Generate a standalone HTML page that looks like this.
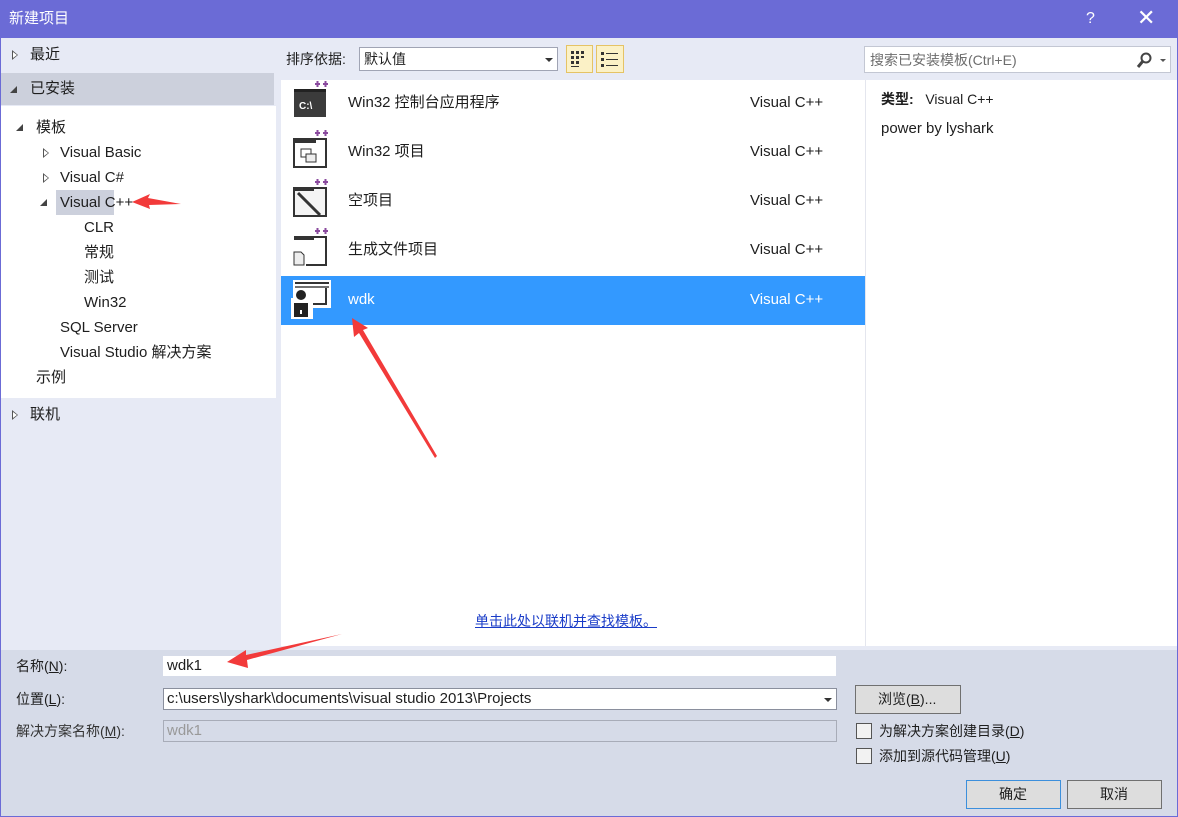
<!DOCTYPE html>
<html><head><meta charset="utf-8"><style>
*{margin:0;padding:0;box-sizing:border-box}
body{width:1178px;height:817px;position:relative;overflow:hidden;background:#e7eaf5;font-family:"Liberation Sans","Noto Sans CJK SC",sans-serif;font-size:15px;color:#1e1e1e}
.a{position:absolute;white-space:nowrap;line-height:20px}
.tri{position:absolute;width:0;height:0}
.ro{border-left:6px solid #555;border-top:5px solid transparent;border-bottom:5px solid transparent}
.ro::after{content:"";position:absolute;left:-5px;top:-3px;border-left:4px solid #fff;border-top:3px solid transparent;border-bottom:3px solid transparent}
.dn{border-right:7px solid #444;border-top:7px solid transparent}
.item{position:absolute;left:281px;width:584px;height:49px;line-height:20px}
.item .t{position:absolute;left:67px;top:14px}
.item .v{position:absolute;left:469px;top:14px}
u{text-decoration:underline}
</style></head><body>
<div class="a" style="left:0;top:0;width:1178px;height:817px;border:1px solid #6b6bd6;z-index:5"></div>
<div class="a" style="left:0;top:0;width:1178px;height:38px;background:#6b6bd6"></div>
<div class="a" style="left:9px;top:9px;color:#fff;font-size:15px">新建项目</div>
<div class="a" style="left:1086px;top:9px;color:#fff;font-size:16px">?</div>
<div class="a" style="left:1137px;top:8px;color:#fff;font-size:22px;font-weight:300">✕</div>

<!-- left -->
<div class="tri ro" style="left:12px;top:50px"></div>
<div class="a" style="left:30px;top:45px">最近</div>
<div class="a" style="left:1px;top:73px;width:273px;height:32px;background:#ccd0dc"></div>
<div class="tri dn" style="left:10px;top:86px"></div>
<div class="a" style="left:30px;top:79px">已安装</div>
<div class="a" style="left:1px;top:106px;width:275px;height:292px;background:#fff"></div>
<div class="tri dn" style="left:16px;top:124px"></div>
<div class="a" style="left:36px;top:118px">模板</div>
<div class="tri ro" style="left:43px;top:148px"></div>
<div class="a" style="left:60px;top:143px">Visual Basic</div>
<div class="tri ro" style="left:43px;top:173px"></div>
<div class="a" style="left:60px;top:168px">Visual C#</div>
<div class="a" style="left:56px;top:190px;width:58px;height:25px;background:#ccd0dc"></div>
<div class="tri dn" style="left:40px;top:199px"></div>
<div class="a" style="left:60px;top:193px">Visual C++</div>
<div class="a" style="left:84px;top:218px">CLR</div>
<div class="a" style="left:84px;top:243px">常规</div>
<div class="a" style="left:84px;top:268px">测试</div>
<div class="a" style="left:84px;top:293px">Win32</div>
<div class="a" style="left:60px;top:318px">SQL Server</div>
<div class="a" style="left:60px;top:343px">Visual Studio 解决方案</div>
<div class="a" style="left:36px;top:368px">示例</div>
<div class="tri ro" style="left:12px;top:410px"></div>
<div class="a" style="left:30px;top:405px">联机</div>

<!-- toolbar -->
<div class="a" style="left:286px;top:49px;font-size:14px">排序依据:</div>
<div class="a" style="left:359px;top:47px;width:199px;height:24px;background:#fff;border:1px solid #a0a4b4"></div>
<div class="a" style="left:364px;top:49px;font-size:14px">默认值</div>
<div class="a" style="left:545px;top:58px;border-top:4px solid #333;border-left:4px solid transparent;border-right:4px solid transparent"></div>
<div class="a" style="left:566px;top:45px;width:27px;height:28px;background:#fbf1c6;border:1px solid #e5c365"></div>
<svg class="a" style="left:570px;top:50px" width="20" height="20"><g fill="#333"><rect x="1" y="1" width="3" height="3"/><rect x="6" y="1" width="3" height="3"/><rect x="11" y="1" width="3" height="3"/><rect x="1" y="6" width="3" height="3"/><rect x="6" y="6" width="3" height="3"/><rect x="11" y="6" width="3" height="2"/><rect x="1" y="11" width="3" height="3"/><rect x="6" y="11" width="3" height="3"/><rect x="1" y="16" width="8" height="1"/></g></svg>
<div class="a" style="left:596px;top:45px;width:28px;height:28px;background:#fbf1c6;border:1px solid #e5c365"></div>
<svg class="a" style="left:600px;top:50px" width="20" height="20"><g fill="#333"><rect x="1" y="2" width="3" height="3"/><rect x="6" y="3" width="12" height="1"/><rect x="1" y="8" width="3" height="3"/><rect x="6" y="9" width="12" height="1"/><rect x="1" y="14" width="3" height="3"/><rect x="6" y="15" width="12" height="1"/></g></svg>
<div class="a" style="left:864px;top:46px;width:307px;height:27px;background:#fff;border:1px solid #c3c7d3"></div>
<div class="a" style="left:870px;top:50px;color:#6d6d6d;font-size:14px">搜索已安装模板(Ctrl+E)</div>
<svg class="a" style="left:1136px;top:51px" width="32" height="18"><circle cx="10" cy="7" r="4.5" fill="none" stroke="#444" stroke-width="2"/><line x1="7" y1="10" x2="2" y2="16" stroke="#444" stroke-width="3"/><path d="M24 8h6l-3 3z" fill="#555"/></svg>

<!-- list -->
<div class="a" style="left:281px;top:80px;width:584px;height:566px;background:#fff"></div>
<div class="a" style="left:865px;top:80px;width:312px;height:566px;background:#fff;border-left:1px solid #e4e6ee"></div>

<div class="item" style="top:79px"><svg class="a" style="left:11px;top:2px" width="40" height="40"><rect x="2" y="8" width="32" height="28" fill="#3b3b3b"/><rect x="2" y="8" width="32" height="3" fill="#222"/><text x="7" y="28" fill="#fff" font-size="10" font-family="Liberation Sans" font-weight="bold">C:\</text><path d="M23 3h5M25.5 0v6M31 3h5M33.5 0v6" stroke="#8a4a9e" stroke-width="2"/></svg><span class="t">Win32 控制台应用程序</span><span class="v">Visual C++</span></div>
<div class="item" style="top:128px"><svg class="a" style="left:11px;top:2px" width="40" height="40"><rect x="2" y="9" width="32" height="28" fill="#fff" stroke="#333" stroke-width="2"/><rect x="2" y="8" width="22" height="5" fill="#333"/><rect x="9" y="19" width="10" height="8" fill="none" stroke="#333"/><rect x="14" y="24" width="10" height="8" fill="#eee" stroke="#333"/><path d="M23 3h5M25.5 0v6M31 3h5M33.5 0v6" stroke="#8a4a9e" stroke-width="2"/></svg><span class="t">Win32 项目</span><span class="v">Visual C++</span></div>
<div class="item" style="top:177px"><svg class="a" style="left:11px;top:2px" width="40" height="40"><rect x="2" y="9" width="32" height="28" fill="#f4f4f4" stroke="#333" stroke-width="2"/><rect x="2" y="8" width="20" height="4" fill="#333"/><path d="M6 14l22 22" stroke="#333" stroke-width="3"/><path d="M23 3h5M25.5 0v6M31 3h5M33.5 0v6" stroke="#8a4a9e" stroke-width="2"/></svg><span class="t">空项目</span><span class="v">Visual C++</span></div>
<div class="item" style="top:226px"><svg class="a" style="left:11px;top:2px" width="40" height="40"><path d="M2 9h32v28H14" fill="none" stroke="#333" stroke-width="2"/><rect x="2" y="8" width="20" height="4" fill="#333"/><path d="M2 24h7l3 3v10H2z" fill="#eee" stroke="#333"/><path d="M23 3h5M25.5 0v6M31 3h5M33.5 0v6" stroke="#8a4a9e" stroke-width="2"/></svg><span class="t">生成文件项目</span><span class="v">Visual C++</span></div>
<div class="item" style="top:276px;background:#3399ff;color:#fff"><svg class="a" style="left:10px;top:3px" width="40" height="40"><rect x="2" y="1" width="38" height="28" fill="#fff"/><g fill="#333"><rect x="4" y="3" width="34" height="2"/><rect x="4" y="7" width="34" height="2" opacity=".7"/><rect x="34" y="9" width="2" height="16"/><rect x="22" y="24" width="14" height="2"/></g><rect x="0" y="19" width="22" height="21" fill="#fff"/><circle cx="10" cy="16" r="5" fill="#222"/><rect x="3" y="24" width="14" height="14" fill="#222"/><rect x="9" y="31" width="2" height="4" fill="#fff"/></svg><span class="t">wdk</span><span class="v">Visual C++</span></div>

<div class="a" style="left:475px;top:611px;color:#1a3cc8;font-size:14px"><u>单击此处以联机并查找模板。</u></div>

<div class="a" style="left:881px;top:89px;font-size:14px"><b>类型:</b>&nbsp;&nbsp; Visual C++</div>
<div class="a" style="left:881px;top:119px">power by lyshark</div>

<!-- bottom -->
<div class="a" style="left:0;top:650px;width:1178px;height:167px;background:#d6dbe8"></div>
<div class="a" style="left:16px;top:656px;font-size:14px">名称(<u>N</u>):</div>
<div class="a" style="left:163px;top:656px;width:673px;height:20px;background:#fff"></div>
<div class="a" style="left:167px;top:656px">wdk1</div>
<div class="a" style="left:16px;top:689px;font-size:14px">位置(<u>L</u>):</div>
<div class="a" style="left:163px;top:688px;width:674px;height:22px;background:#fff;border:1px solid #8a8f9d"></div>
<div class="a" style="left:167px;top:689px">c:\users\lyshark\documents\visual studio 2013\Projects</div>
<div class="a" style="left:824px;top:698px;border-top:4px solid #333;border-left:4px solid transparent;border-right:4px solid transparent"></div>
<div class="a" style="left:16px;top:721px;font-size:14px;color:#333">解决方案名称(<u>M</u>):</div>
<div class="a" style="left:163px;top:720px;width:674px;height:22px;background:#d6dbe8;border:1px solid #a8acb8"></div>
<div class="a" style="left:167px;top:721px;color:#999">wdk1</div>
<div class="a" style="left:855px;top:685px;width:106px;height:29px;background:#dddddd;border:1px solid #707070"></div>
<div class="a" style="left:878px;top:689px;font-size:14px">浏览(<u>B</u>)...</div>
<div class="a" style="left:856px;top:723px;width:16px;height:16px;background:#f2f2f2;border:1px solid #555"></div>
<div class="a" style="left:879px;top:721px;font-size:14px">为解决方案创建目录(<u>D</u>)</div>
<div class="a" style="left:856px;top:748px;width:16px;height:16px;background:#f2f2f2;border:1px solid #555"></div>
<div class="a" style="left:879px;top:746px;font-size:14px">添加到源代码管理(<u>U</u>)</div>
<div class="a" style="left:966px;top:780px;width:95px;height:29px;background:#dddddd;border:1px solid #3c8fdc"></div>
<div class="a" style="left:999px;top:784px;font-size:14px">确定</div>
<div class="a" style="left:1067px;top:780px;width:95px;height:29px;background:#dddddd;border:1px solid #707070"></div>
<div class="a" style="left:1100px;top:784px;font-size:14px">取消</div>

<!-- arrows -->
<svg class="a" style="left:0;top:0" width="1178" height="817">
<g fill="#f23a3a">
<path d="M181 204 L148 198 L150 194 L132 202 L150 209 L149 205 Z"/>
<path d="M437 456 L363 330 L368 328 L352 318 L354 337 L359 333 L435 458 Z"/>
<path d="M342 634 L246 655 L246 650 L227 662 L248 668 L247 660 Z"/>
</g></svg>
</body></html>
